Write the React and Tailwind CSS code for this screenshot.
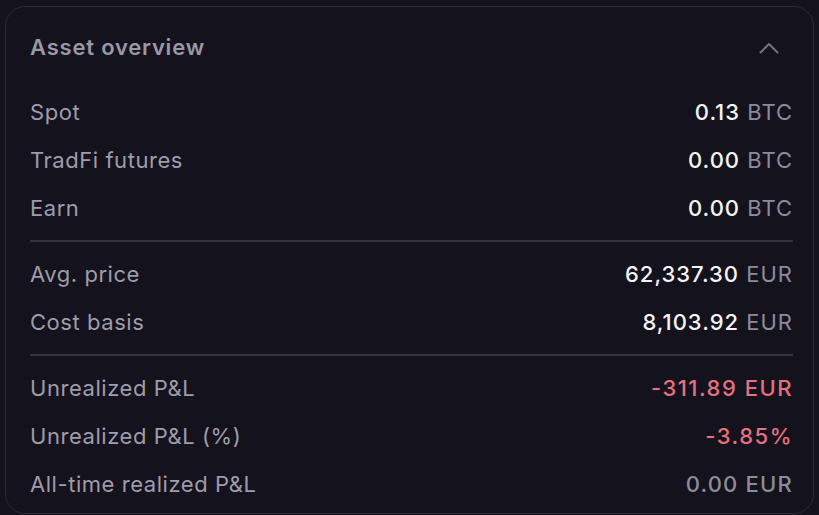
const GROUPS = [
  [
    { label: "Spot", value: "0.13", unit: "BTC" },
    { label: "TradFi futures", value: "0.00", unit: "BTC" },
    { label: "Earn", value: "0.00", unit: "BTC" },
  ],
  [
    { label: "Avg. price", value: "62,337.30", unit: "EUR" },
    { label: "Cost basis", value: "8,103.92", unit: "EUR" },
  ],
  [
    { label: "Unrealized P&L", value: "-311.89 EUR", tone: "red" },
    { label: "Unrealized P&L (%)", value: "-3.85%", tone: "red" },
    { label: "All-time realized P&L", value: "0.00 EUR", tone: "muted" },
  ],
];

function Row({ row }) {
  return (
    <div className="flex h-[48px] items-center justify-between">
      <span className="text-[#9e9caa]">{row.label}</span>
      {row.tone === "red" && (
        <span className="font-medium tracking-[1.5px] text-[#e7707f]">{row.value}</span>
      )}
      {row.tone === "muted" && (
        <span className="font-medium tracking-[1.2px] text-[#8d8b99]">{row.value}</span>
      )}
      {!row.tone && (
        <span className="tracking-[1px]">
          <span className="font-medium text-[#f5f5f7]">{row.value}</span>{" "}
          <span className="text-[#8d8b99]">{row.unit}</span>
        </span>
      )}
    </div>
  );
}

export default function App() {
  return (
    <div
      className="h-[515px] w-[819px] overflow-hidden bg-[#14121c] px-[5px] pt-[6px] text-[22px] tracking-[0.55px]"
      style={{ fontFamily: "Inter, 'Noto Sans', sans-serif" }}
    >
      <div className="h-[508px] rounded-[20px] border border-[#2c2a37] bg-[#14121c] pl-[24px] pr-[20px]">
        {/* header */}
        <div className="flex h-[81px] items-center justify-between">
          <h2 className="text-[22px] font-semibold tracking-[0.8px] text-[#9a98a6]">
            Asset overview
          </h2>
          <svg
            width="20"
            height="12"
            viewBox="0 0 20 12"
            fill="none"
            className="mr-[14px]"
          >
            <polyline
              points="1.5,10.5 10,2 18.5,10.5"
              stroke="#737180"
              strokeWidth="2"
              strokeLinecap="round"
              strokeLinejoin="round"
            />
          </svg>
        </div>

        {GROUPS.map((group, i) => (
          <div key={i}>
            {i > 0 && <div className="my-[8px] h-[2px] bg-[#34323f]" />}
            {group.map((row) => (
              <Row key={row.label} row={row} />
            ))}
          </div>
        ))}
      </div>
    </div>
  );
}
